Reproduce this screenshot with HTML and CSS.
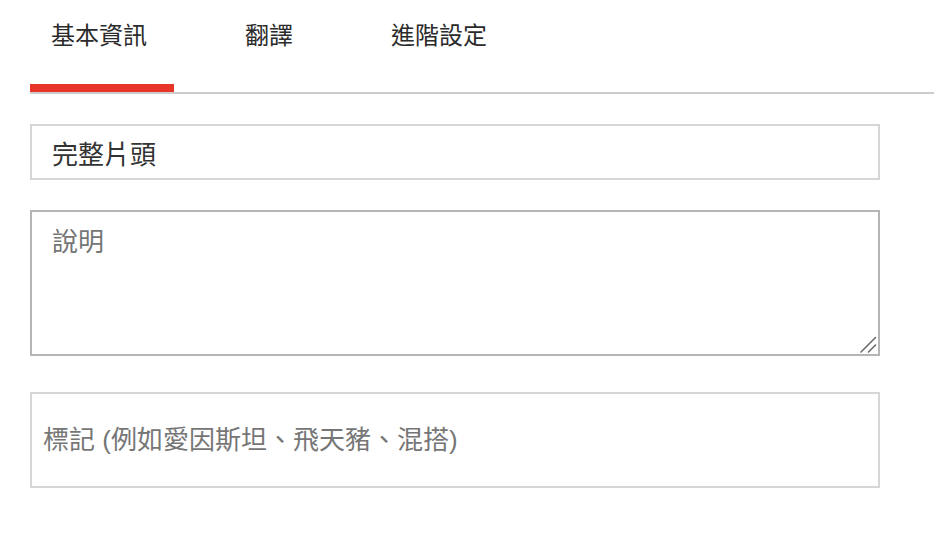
FILE: index.html
```html
<!DOCTYPE html>
<html lang="zh-Hant">
<head>
<meta charset="utf-8">
<title>影片詳細資料</title>
<link rel="stylesheet" href="styles.css">
</head>
<body>
  <nav class="tabs">
    <div class="tab tab-active">基本資訊</div>
    <div class="tab">翻譯</div>
    <div class="tab">進階設定</div>
  </nav>
  <form class="form">
    <input class="field field-title" type="text" value="完整片頭">
    <div class="desc-wrap">
      <textarea class="field field-desc" placeholder="說明"></textarea>
      <svg class="grip" width="20" height="20" viewBox="0 0 20 20" aria-hidden="true">
        <line x1="3" y1="18" x2="17.5" y2="3.5" />
        <line x1="10.5" y1="18" x2="17.5" y2="11" />
      </svg>
    </div>
    <input class="field field-tags" type="text" placeholder="標記 (例如愛因斯坦、飛天豬、混搭)">
  </form>
</body>
</html>
```

FILE: styles.css
```css
html, body {
  margin: 0;
  padding: 0;
  background: #ffffff;
}

body {
  font-family: "Liberation Sans", "Noto Sans CJK TC", sans-serif;
  color: #333333;
}

.tabs {
  display: flex;
  gap: 50px;
  margin-left: 30px;
  border-bottom: 2px solid #cccccc;
}

.tab {
  font-family: "Noto Sans CJK TC", sans-serif;
  font-size: 24px;
  line-height: 24px;
  color: #2b2b2b;
  padding: 22px 27px 38px 21px;
  border-bottom: 8px solid transparent;
}

.tab-active {
  border-bottom-color: #e8352a;
}

.form {
  display: flex;
  flex-direction: column;
  padding: 30px 0 0 30px;
  width: 850px;
}

.field {
  box-sizing: border-box;
  width: 850px;
  margin: 0;
  font-family: "Liberation Sans", "Noto Sans CJK TC", sans-serif;
  font-size: 26px;
  color: #333333;
  background: #ffffff;
  border-radius: 0;
  outline: none;
}

.field::placeholder {
  color: #767676;
  opacity: 1;
}

.field-title {
  height: 56px;
  padding: 0 20px;
  border: 2px solid #d6d6d6;
}

.desc-wrap {
  position: relative;
  margin-top: 30px;
  width: 850px;
  height: 146px;
}

.field-desc {
  display: block;
  height: 146px;
  padding: 9px 20px;
  border: 2px solid #b5b5b5;
  resize: none;
  line-height: normal;
}

.grip {
  position: absolute;
  right: 2px;
  bottom: 2px;
  stroke: #6a6a6a;
  stroke-width: 1.6;
  stroke-linecap: round;
}

.field-tags {
  height: 96px;
  margin-top: 36px;
  padding: 0 11px;
  border: 2px solid #d6d6d6;
}
```
